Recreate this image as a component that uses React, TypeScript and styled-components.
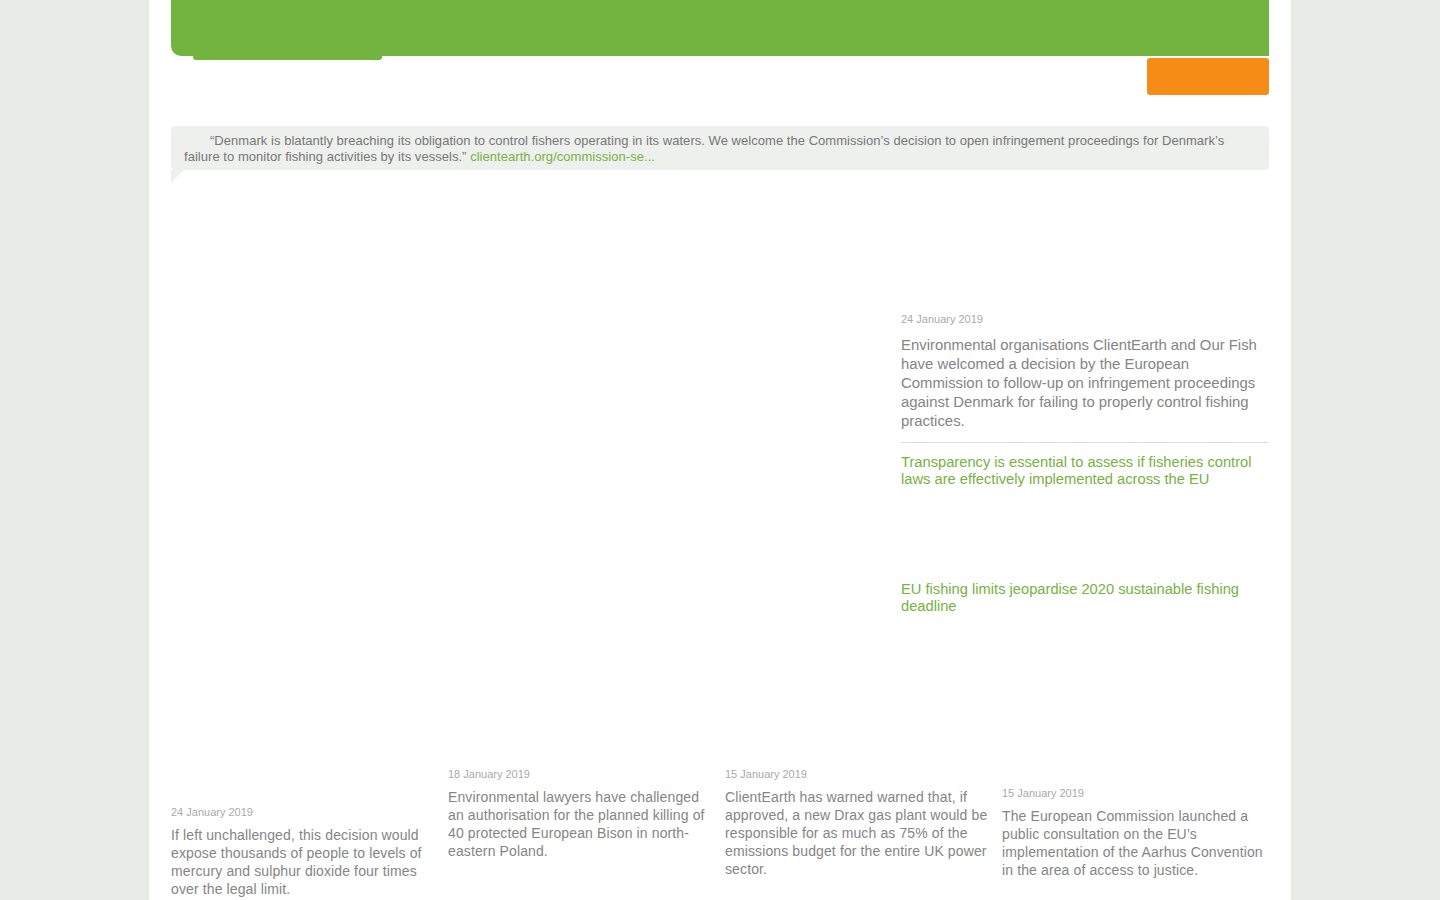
import { FC } from "react";
import styled, { createGlobalStyle } from "styled-components";

const GlobalStyle = createGlobalStyle`
  body {
    margin: 0;
    background-color: #e8ece7;
    font-family: "Liberation Sans", Arial, sans-serif;
  }
`;

const Page = styled.div`
  width: 1142px;
  min-height: 900px;
  margin: 0 auto;
  padding: 0 22px 40px;
  box-sizing: border-box;
  background-color: #fff;
`;

const Header = styled.div`
  height: 56px;
  background-color: #72b43f;
  border-radius: 0 0 0 10px;
`;

const SubBar = styled.div`
  display: flex;
  justify-content: space-between;
  align-items: flex-start;
  height: 39px;
`;

const Tab = styled.div`
  width: 189px;
  height: 4px;
  margin-left: 22px;
  background-color: #72b43f;
  border-radius: 0 0 3px 3px;
`;

const OrangeButton = styled.div`
  width: 122px;
  height: 37px;
  margin-top: 2px;
  background-color: #f68b16;
  border-radius: 3px;
`;

const Quote = styled.div`
  position: relative;
  margin-top: 31px;
  padding: 7px 13px 5px;
  background-color: #eef0ee;
  border-radius: 4px;
  font-size: 13px;
  line-height: 16px;
  letter-spacing: 0.04px;
  color: #777;
  text-indent: 26px;

  &::after {
    content: "";
    position: absolute;
    left: 0;
    top: 100%;
    border-top: 13px solid #eef0ee;
    border-right: 13px solid transparent;
  }
`;

const GreenLink = styled.a`
  color: #77b243;
  text-decoration: none;
`;

const Main = styled.div`
  display: grid;
  grid-template-columns: 1fr 368px;
  column-gap: 20px;
`;

const RightCol = styled.div`
  grid-column: 2;
  padding-top: 142px;
`;

const DateLine = styled.div`
  font-size: 11px;
  line-height: 14px;
  color: #aaa;
`;

const Lead = styled.p`
  margin: 10px 0 0;
  padding-right: 8px;
  font-size: 14.9px;
  line-height: 19px;
  color: #858585;
`;

const Divider = styled.hr`
  margin: 11px 0 0;
  border: 0;
  border-top: 1px solid #dedede;
`;

const Headline = styled.div<{ $gap: number }>`
  margin-top: ${(p) => p.$gap}px;
  padding-right: 8px;
  font-size: 14.7px;
  line-height: 17px;
  color: #77b243;
`;

const Cards = styled.div`
  display: grid;
  grid-template-columns: repeat(4, 1fr);
  column-gap: 10px;
  align-items: start;
  margin-top: 152px;
`;

const Card = styled.div<{ $offset: number }>`
  padding-top: ${(p) => p.$offset}px;
`;

const CardText = styled.p`
  margin: 7px 0 0;
  font-size: 14px;
  line-height: 18px;
  letter-spacing: 0.12px;
  color: #858585;
`;

const cards = [
  {
    date: "24 January 2019",
    offset: 38,
    text: "If left unchallenged, this decision would expose thousands of people to levels of mercury and sulphur dioxide four times over the legal limit.",
  },
  {
    date: "18 January 2019",
    offset: 0,
    text: "Environmental lawyers have challenged an authorisation for the planned killing of 40 protected European Bison in north-eastern Poland.",
  },
  {
    date: "15 January 2019",
    offset: 0,
    text: "ClientEarth has warned warned that, if approved, a new Drax gas plant would be responsible for as much as 75% of the emissions budget for the entire UK power sector.",
  },
  {
    date: "15 January 2019",
    offset: 19,
    text: "The European Commission launched a public consultation on the EU\u2019s implementation of the Aarhus Convention in the area of access to justice.",
  },
];

const App: FC = () => {
  return (
    <>
      <GlobalStyle />
      <Page>
        <Header />
        <SubBar>
          <Tab />
          <OrangeButton />
        </SubBar>
        <Quote>
          “Denmark is blatantly breaching its obligation to control fishers
          operating in its waters. We welcome the Commission’s decision to open
          infringement proceedings for Denmark’s failure to monitor fishing
          activities by its vessels.”{" "}
          <GreenLink href="#">clientearth.org/commission-se...</GreenLink>
        </Quote>
        <Main>
          <RightCol>
            <DateLine>24 January 2019</DateLine>
            <Lead>
              Environmental organisations ClientEarth and Our Fish have
              welcomed a decision by the European Commission to follow-up on
              infringement proceedings against Denmark for failing to properly
              control fishing practices.
            </Lead>
            <Divider />
            <Headline $gap={11}>
              Transparency is essential to assess if fisheries control laws are
              effectively implemented across the EU
            </Headline>
            <Headline $gap={93}>
              EU fishing limits jeopardise 2020 sustainable fishing deadline
            </Headline>
          </RightCol>
        </Main>
        <Cards>
          {cards.map((card, index) => (
            <Card $offset={card.offset} key={index}>
              <DateLine>{card.date}</DateLine>
              <CardText>{card.text}</CardText>
            </Card>
          ))}
        </Cards>
      </Page>
    </>
  );
};

export default App;
